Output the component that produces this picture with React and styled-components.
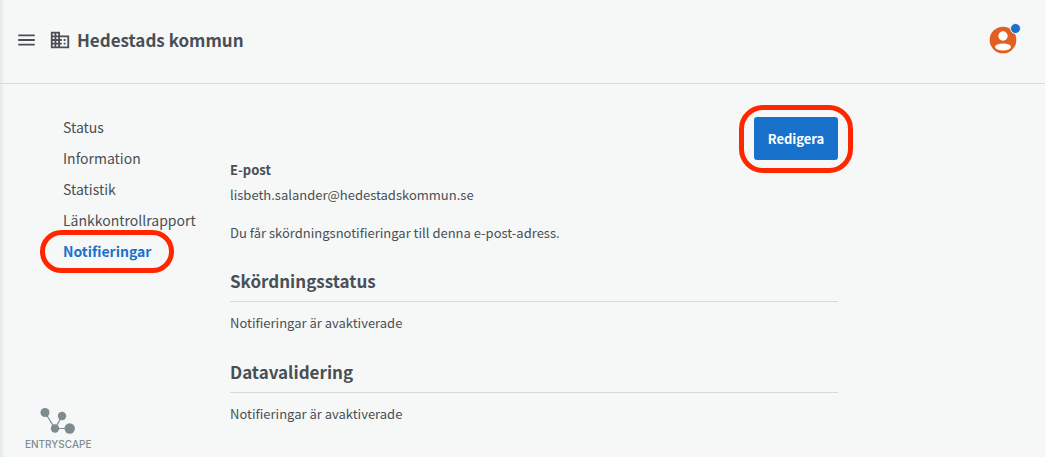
import React from "react";
import styled, { createGlobalStyle, css } from "styled-components";

const ink = "#494f54";
const blue = "#1872cb";
const rule = "#d6dad9";
const marker = "#ff2600";

const GlobalStyle = createGlobalStyle`
  *, *::before, *::after { box-sizing: border-box; }
  body {
    margin: 0;
    background: #f6f8f8;
    color: ${ink};
    font: 400 13px/20px "Noto Sans CJK JP", "Noto Sans", sans-serif;
  }
`;

const highlight = css`
  position: relative;
  &::after {
    content: "";
    position: absolute;
    border: 5px solid ${marker};
    pointer-events: none;
  }
`;

const Page = styled.div`
  min-height: 100vh;
  display: flex;
  flex-direction: column;
  box-shadow: inset 4px 0 4px -3px #dcdfdf;
`;

const Header = styled.header`
  display: flex;
  align-items: center;
  height: 84px;
  padding: 0 26px 3px 15px;
  border-bottom: 1px solid ${rule};
`;

const IconButton = styled.button`
  display: flex;
  position: relative;
  padding: 0;
  border: 0;
  background: none;
  color: inherit;
  cursor: pointer;
`;

const Brand = styled.div`
  display: flex;
  align-items: center;
  gap: 6px;
  flex: 1;
  margin-left: 11px;
`;

const Title = styled.h1`
  margin: 0;
  font-size: 17px;
  line-height: 24px;
  font-weight: 700;
`;

const Badge = styled.span`
  position: absolute;
  top: -1px;
  right: -2px;
  width: 11px;
  height: 11px;
  border: 1px solid #f6f8f8;
  border-radius: 50%;
  background: ${blue};
`;

const Body = styled.div`
  flex: 1;
  display: grid;
  grid-template-columns: 205px minmax(0, 608px);
  padding: 0 24px 0 25px;
`;

const Sidebar = styled.aside`
  display: flex;
  flex-direction: column;
  justify-content: space-between;
  align-items: flex-start;
  padding: 31px 0 7px;
`;

const NavList = styled.ul`
  display: grid;
  justify-items: start;
  gap: 7px;
  margin: 0 0 0 38px;
  padding: 0;
  list-style: none;
`;

const NavLink = styled.a`
  display: block;
  font-size: 14px;
  line-height: 24px;
  text-decoration: none;
  white-space: nowrap;
  color: ${(p) => (p.$active ? blue : ink)};
  font-weight: ${(p) => (p.$active ? 700 : 400)};
  ${(p) =>
    p.$active &&
    css`
      ${highlight}
      &::after {
        inset: -9px -23px -10px;
        border-radius: 22px;
      }
    `}
`;

const Logo = styled.div`
  display: grid;
  justify-items: center;
  gap: 4px;
  color: #7f8b8f;
  font: 500 10px/12px Inter, sans-serif;
`;

const Content = styled.main`
  padding-top: 33px;
`;

const Actions = styled.div`
  display: flex;
  justify-content: flex-end;
`;

const EditButton = styled.button`
  min-width: 84px;
  height: 43px;
  padding: 0 12px;
  border: 0;
  border-radius: 3px;
  background: ${blue};
  color: #fff;
  font: inherit;
  font-weight: 700;
  cursor: pointer;
  ${highlight}
  &::after {
    inset: -12px -15px -13px;
    border-radius: 24px;
  }
`;

const Details = styled.dl`
  margin: 0 0 18px;
`;

const Term = styled.dt`
  font-weight: 700;
  margin-bottom: 5px;
`;

const Value = styled.dd`
  margin: 0;
`;

const Text = styled.p`
  margin: 0;
`;

const Section = styled.section`
  margin-top: 26px;

  & + & {
    margin-top: 27px;
  }
`;

const SectionTitle = styled.h2`
  margin: 0 0 11px;
  padding-bottom: 8px;
  border-bottom: 1px solid ${rule};
  font-size: 17px;
  line-height: 24px;
  font-weight: 700;
`;

const pages = ["Status", "Information", "Statistik", "Länkkontrollrapport", "Notifieringar"];
const statuses = ["Skördningsstatus", "Datavalidering"];

const MenuIcon = () => (
  <svg width="23" height="22" viewBox="0 0 24 24" fill="currentColor" aria-hidden="true">
    <path d="M3 18h18v-2H3v2zm0-5h18v-2H3v2zm0-7v2h18V6H3z" />
  </svg>
);

const BuildingIcon = () => (
  <svg width="22" height="22" viewBox="0 0 24 24" fill="currentColor" aria-hidden="true">
    <path d="M12 7V3H2v18h20V7H12zM6 19H4v-2h2v2zm0-4H4v-2h2v2zm0-4H4V9h2v2zm0-4H4V5h2v2zm4 12H8v-2h2v2zm0-4H8v-2h2v2zm0-4H8V9h2v2zm0-4H8V5h2v2zm10 12h-8v-2h2v-2h-2v-2h2v-2h-2V9h8v10zm-2-8h-2v2h2v-2zm0 4h-2v2h2v-2z" />
  </svg>
);

const AccountIcon = () => (
  <svg width="32" height="32" viewBox="0 0 24 24" aria-hidden="true">
    <circle cx="12" cy="12" r="10" fill="#e35f21" />
    <circle cx="12" cy="9" r="3.5" fill="#fff" />
    <ellipse cx="12" cy="17.3" rx="6" ry="2.6" fill="#fff" />
  </svg>
);

const LogoMark = () => (
  <svg width="38" height="28" viewBox="0 0 38 28" aria-hidden="true">
    <path d="M6 6.500L16 22.500L23 10M16 22.500H30" fill="none" stroke="currentColor" strokeWidth="1.200" />
    <g fill="currentColor">
      <circle cx="6" cy="6.500" r="4.500" />
      <circle cx="23" cy="10" r="4.200" />
      <circle cx="16" cy="22.500" r="4.200" />
      <circle cx="30.700" cy="22.500" r="5.200" />
    </g>
  </svg>
);

export default function App() {
  return (
    <Page>
      <GlobalStyle />
      <Header>
        <IconButton type="button" aria-label="Meny">
          <MenuIcon />
        </IconButton>
        <Brand>
          <BuildingIcon />
          <Title>Hedestads kommun</Title>
        </Brand>
        <IconButton type="button" aria-label="Konto">
          <AccountIcon />
          <Badge />
        </IconButton>
      </Header>
      <Body>
        <Sidebar>
          <nav>
            <NavList>
              {pages.map((page) => (
                <li key={page}>
                  <NavLink href="#" $active={page === "Notifieringar"}>
                    {page}
                  </NavLink>
                </li>
              ))}
            </NavList>
          </nav>
          <Logo>
            <LogoMark />
            <span>ENTRYSCAPE</span>
          </Logo>
        </Sidebar>
        <Content>
          <Actions>
            <EditButton type="button">Redigera</EditButton>
          </Actions>
          <Details>
            <Term>E-post</Term>
            <Value>lisbeth.salander@hedestadskommun.se</Value>
          </Details>
          <Text>Du får skördningsnotifieringar till denna e-post-adress.</Text>
          {statuses.map((status) => (
            <Section key={status}>
              <SectionTitle>{status}</SectionTitle>
              <Text>Notifieringar är avaktiverade</Text>
            </Section>
          ))}
        </Content>
      </Body>
    </Page>
  );
}
